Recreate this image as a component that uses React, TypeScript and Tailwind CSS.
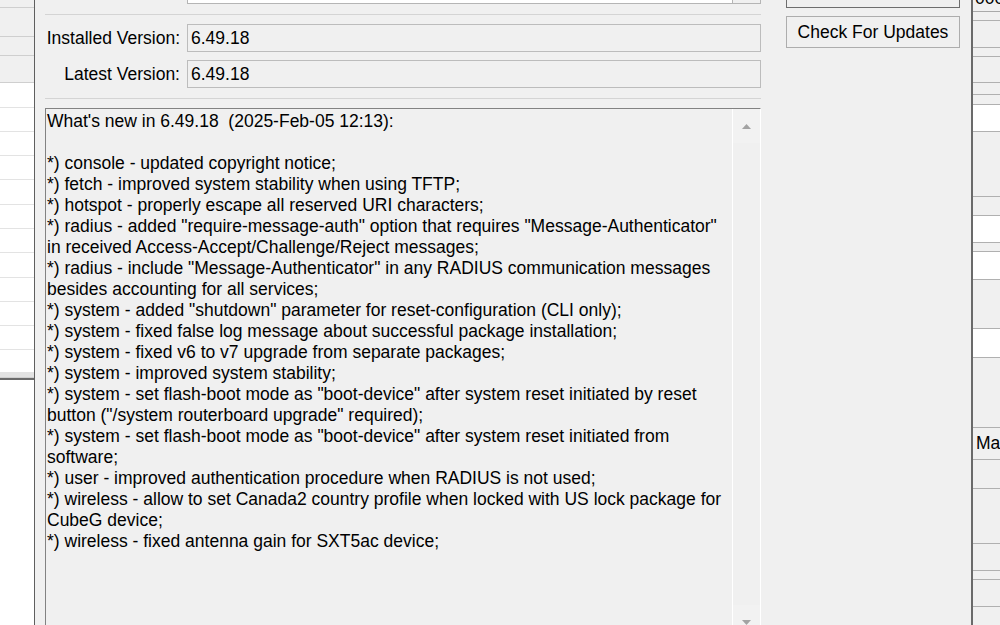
const notes = [
  "What's new in 6.49.18  (2025-Feb-05 12:13):",
  "",
  "*) console - updated copyright notice;",
  "*) fetch - improved system stability when using TFTP;",
  "*) hotspot - properly escape all reserved URI characters;",
  '*) radius - added "require-message-auth" option that requires "Message-Authenticator"',
  "in received Access-Accept/Challenge/Reject messages;",
  '*) radius - include "Message-Authenticator" in any RADIUS communication messages',
  "besides accounting for all services;",
  '*) system - added "shutdown" parameter for reset-configuration (CLI only);',
  "*) system - fixed false log message about successful package installation;",
  "*) system - fixed v6 to v7 upgrade from separate packages;",
  "*) system - improved system stability;",
  '*) system - set flash-boot mode as "boot-device" after system reset initiated by reset',
  'button ("/system routerboard upgrade" required);',
  '*) system - set flash-boot mode as "boot-device" after system reset initiated from',
  "software;",
  "*) user - improved authentication procedure when RADIUS is not used;",
  "*) wireless - allow to set Canada2 country profile when locked with US lock package for",
  "CubeG device;",
  "*) wireless - fixed antenna gain for SXT5ac device;",
];

// background window on the left
const leftRows = [
  { h: 8, white: false },
  { h: 29, white: false },
  { h: 19, white: false },
  { h: 27, white: false },
  { h: 25, white: true },
  { h: 24, white: true },
  { h: 24, white: true },
  { h: 24, white: true },
  { h: 25, white: true },
  { h: 24, white: true },
  { h: 24, white: true },
  { h: 25, white: true },
  { h: 24, white: true },
  { h: 24, white: true },
  { h: 24, white: true },
];

// background window on the right
const rightRows = [
  { h: 9, white: false },
  { h: 27, white: false },
  { h: 9, white: false },
  { h: 26, white: false },
  { h: 12, white: false },
  { h: 10, white: false },
  { h: 27, white: true },
  { h: 65, white: false },
  { h: 19, white: false },
  { h: 27, white: true },
  { h: 9, white: false },
  { h: 28, white: true },
  { h: 49, white: false },
  { h: 29, white: true },
  { h: 70, white: false },
  { h: 32, white: false, text: "Ma" },
  { h: 29, white: false },
  { h: 55, white: false },
  { h: 27, white: false },
  { h: 9, white: false },
  { h: 27, white: false },
  { h: 30, white: false },
];

const Arrow = ({ down }: { down?: boolean }) => (
  <svg width="9" height="5" viewBox="0 0 9 5">
    <path d={down ? "M0 0 L4.5 5 L9 0Z" : "M0 5 L4.5 0 L9 5Z"} fill="#a3a3a3" />
  </svg>
);

export default function App() {
  return (
    <div className="w-[1000px] h-[625px] overflow-hidden flex bg-white text-black font-['Liberation_Sans',Arial,sans-serif] text-[17.5px]">
      {/* Left background list */}
      <div className="w-[34px] shrink-0 flex flex-col">
        {leftRows.map((r, i) => (
          <div
            key={i}
            style={{ height: r.h }}
            className={`shrink-0 border-b ${r.white ? "bg-white border-[#e3e3e3]" : "bg-[#f0f0f0] border-[#cfcfcf]"}`}
          />
        ))}
        <div className="h-[22px] shrink-0 bg-white" />
        <div className="h-[6px] shrink-0 bg-[#e2e2e2] border-b border-[#cfcfcf]" />
        <div className="h-[2px] shrink-0 bg-[#6a6a6a]" />
        <div className="flex-1 bg-white" />
      </div>

      {/* Dialog */}
      <div className="w-[939px] shrink-0 h-full bg-[#f0f0f0] border-l border-[#5e5e5e] border-r-2 border-r-[#6a6a6a] flex pl-[10px]">
        <div className="w-[716px] shrink-0 flex flex-col">
          <div className="h-[4px] shrink-0 flex pl-[142px]">
            <div className="w-[546px] border-x border-b border-[#b5b5b5] bg-white" />
            <div className="w-[28px] border-r border-b border-[#b5b5b5]" />
          </div>
          <div className="mt-[10px] h-px shrink-0 bg-[#d4d4d4]" />

          <div className="mt-[9px] h-[28px] shrink-0 flex items-center">
            <div className="w-[142px] pr-[7px] text-right whitespace-nowrap">Installed Version:</div>
            <div className="flex-1 h-full border border-[#bcbcbc] bg-[#f0f0f0] pl-[3px] flex items-center">6.49.18</div>
          </div>
          <div className="mt-[8px] h-[28px] shrink-0 flex items-center">
            <div className="w-[142px] pr-[7px] text-right whitespace-nowrap">Latest Version:</div>
            <div className="flex-1 h-full border border-[#bcbcbc] bg-[#f0f0f0] pl-[3px] flex items-center">6.49.18</div>
          </div>

          <div className="mt-[10px] h-px shrink-0 bg-[#d4d4d4]" />

          {/* release notes */}
          <div className="mt-[9px] h-[531px] shrink-0 flex border-t border-l border-[#828282] border-r border-r-white">
            <div className="flex-1 pl-[1px] pt-[2px] leading-[21px]">
              {notes.map((l, i) => (
                <div key={i} className="h-[21px] whitespace-pre">
                  {l}
                </div>
              ))}
            </div>
            <div className="w-[28px] shrink-0 border-l border-white flex flex-col justify-between">
              <div className="h-[34px] bg-[#f2f2f2] flex items-center justify-center">
                <Arrow />
              </div>
              <div className="h-[34px] bg-[#f2f2f2] flex items-center justify-center">
                <Arrow down />
              </div>
            </div>
          </div>
        </div>

        <div className="ml-[25px] w-[174px] shrink-0 flex flex-col">
          <div className="h-[8px] shrink-0 border-x border-b border-[#6e6e6e] bg-[#f0f0f0]" />
          <button className="mt-[8px] h-[32px] shrink-0 border border-[#adadad] bg-[#f0f0f0] flex items-center justify-center whitespace-nowrap">
            Check For Updates
          </button>
        </div>
      </div>

      {/* Right background window */}
      <div className="flex-1 flex flex-col overflow-hidden">
        <div className="h-[12px] shrink-0 overflow-hidden border-b border-[#a9a9a9] bg-[#f0f0f0] pl-[2px]">
          <div className="mt-[-10px] leading-[17px] whitespace-nowrap">000</div>
        </div>
        {rightRows.map((r, i) => (
          <div
            key={i}
            style={{ height: r.h }}
            className={`shrink-0 border-b border-[#b0b0b0] flex items-center pl-[3px] whitespace-nowrap ${r.white ? "bg-white" : "bg-[#f0f0f0]"}`}
          >
            {r.text}
          </div>
        ))}
      </div>
    </div>
  );
}
